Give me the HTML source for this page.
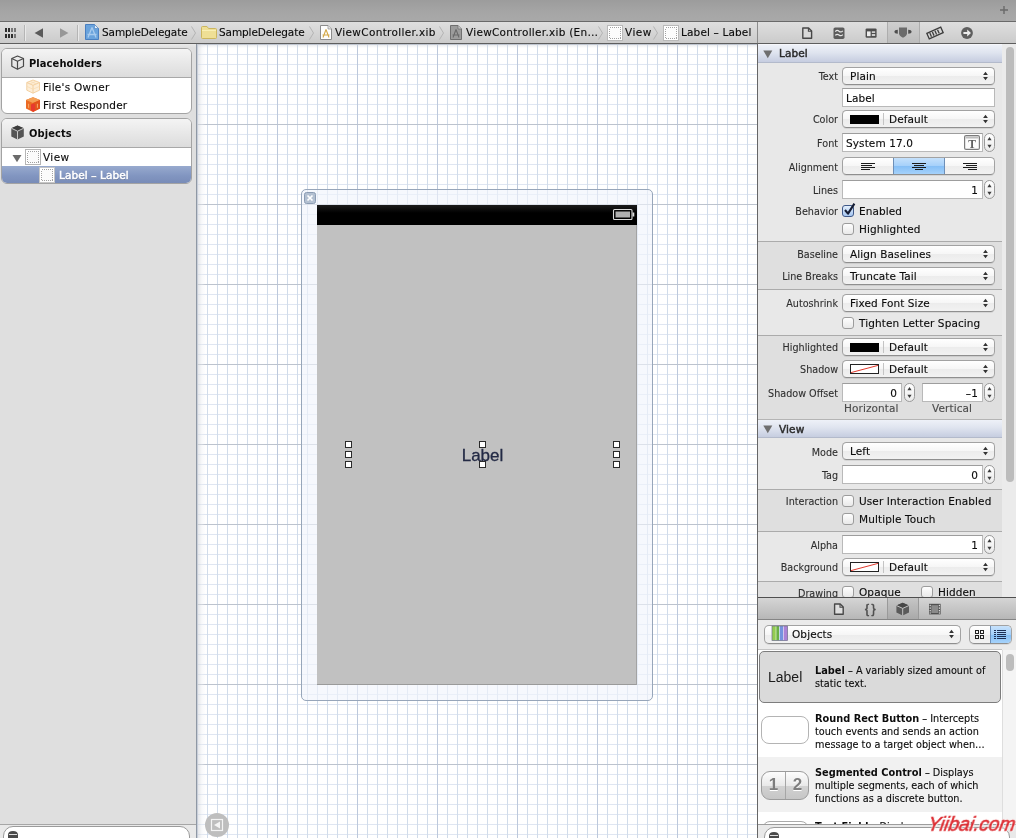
<!DOCTYPE html>
<html>
<head>
<meta charset="utf-8">
<title>ViewController.xib</title>
<style>
html,body{margin:0;padding:0;}
body{width:1016px;height:838px;overflow:hidden;position:relative;background:#dfdfdf;
  font-family:"DejaVu Sans","Liberation Sans",sans-serif;font-size:10.5px;color:#0c0c0c;}
.abs{position:absolute;}
div,span{box-sizing:border-box;}
.t{position:absolute;white-space:nowrap;letter-spacing:0.1px;line-height:14px;height:14px;-webkit-text-stroke:0.12px currentColor;}
.b{font-weight:bold;-webkit-text-stroke:0;font-family:"DejaVu Sans Condensed","DejaVu Sans","Liberation Sans",sans-serif;}
/* top bars */
#title{left:0;top:0;width:1016px;height:21px;background:linear-gradient(#9c9c9c,#a5a5a5 55%,#a9a9a9);}
#tline{left:0;top:21px;width:1016px;height:1px;background:#6a6a6a;}
#jump{left:0;top:22px;width:1016px;height:21px;background:linear-gradient(#dfdfdf,#cbcbcb);}
#jline{left:0;top:43px;width:1016px;height:1px;background:#5e5e5e;}
/* left panel */
#left{left:0;top:44px;width:196px;height:794px;background:linear-gradient(#e9e9e9,#dfdfdf 4px);}
#lline{left:196px;top:44px;width:1px;height:794px;background:#8f98a4;}
.box{position:absolute;left:1px;width:191px;border:1px solid #a3a3a3;border-radius:6px;background:#fff;overflow:hidden;}
.box .hd{position:absolute;left:0;top:0;width:100%;height:29px;background:linear-gradient(#f4f4f4,#dcdcdc);border-bottom:1px solid #a8a8a8;}
/* canvas */
#canvas{left:197px;top:44px;width:560px;height:794px;background-color:#fff;overflow:hidden;}
#cline{left:757px;top:22px;width:1px;height:816px;background:linear-gradient(#8c8c8c,#8c8c8c 21px,#666 21px);}
/* right */
#right{left:758px;top:44px;width:258px;height:794px;background:#e8e8e8;}
.grp{position:absolute;left:758px;width:244px;background:#dfdfdf;}
.sep{position:absolute;left:758px;width:244px;height:1px;background:#ababab;}
.sec{position:absolute;left:758px;width:244px;height:19px;background:linear-gradient(#eef1f8,#dfe4ef 45%,#c6cde0);border-bottom:1px solid #b3bacb;border-top:1px solid #f6f7fb;}
.lbl{position:absolute;right:178px;margin-top:1px;white-space:nowrap;line-height:14px;height:14px;font-family:"DejaVu Sans Condensed","DejaVu Sans","Liberation Sans",sans-serif;font-size:10.7px;color:#2e2e2e;-webkit-text-stroke:0.1px currentColor;}
.pop{position:absolute;left:842px;width:153px;height:18px;border:1px solid #a2a2a2;border-bottom-color:#8f8f8f;border-radius:4.5px;background:linear-gradient(#ffffff,#f6f6f6 50%,#ececec 52%,#f2f2f2);box-shadow:0 1px 0 rgba(0,0,0,.08);}
.fld{position:absolute;height:19px;background:#fff;border:1px solid #b9b9b9;border-top-color:#9d9d9d;}
.stp{position:absolute;width:11px;height:19px;border:1px solid #9a9a9a;border-radius:5.5px;background:linear-gradient(#fff,#eaeaea);}
.cb{position:absolute;width:12px;height:12px;border:1px solid #9c9c9c;border-radius:3px;background:linear-gradient(#fefefe,#e9e9e9);}
.sw{position:absolute;width:29px;height:9px;}
.swsep{position:absolute;width:1px;height:12px;background:#c4c4c4;}
.g{color:#4c4c4c;}
.d{font-size:9.7px;letter-spacing:0;}
.d b{font-weight:bold;font-size:9.8px;-webkit-text-stroke:0;}
#wrap{position:absolute;left:0;top:0;width:1016px;height:838px;will-change:transform;}
</style>
</head>
<body>
<div id="wrap">
<div id="title" class="abs"></div>
<div id="tline" class="abs"></div>
<div id="jump" class="abs"></div>
<div id="jline" class="abs"></div>


<!-- jump bar -->
<svg class="abs" style="left:0;top:22px" width="757" height="21">
  <!-- related items grid icon -->
  <g fill="#2e2e2e">
    <rect x="5" y="6" width="2" height="4"/><rect x="8" y="6" width="2" height="4"/>
    <rect x="5" y="12" width="2" height="4"/><rect x="8" y="12" width="2" height="4"/><rect x="11" y="12" width="2" height="4"/>
  </g>
  <g fill="#777"><rect x="11" y="6" width="2" height="4"/><rect x="14" y="6" width="2" height="4"/><rect x="14" y="12" width="2" height="4"/></g>
  <rect x="24" y="3" width="1" height="16" fill="#b5b5b5"/><rect x="25" y="3" width="1" height="16" fill="#e9e9e9"/>
  <path d="M43 6.2V15.8L34.6 11Z" fill="#5a5a5a"/>
  <path d="M60 6.2V15.8L68.4 11Z" fill="#979797"/>
  <rect x="77" y="3" width="1" height="16" fill="#b5b5b5"/><rect x="78" y="3" width="1" height="16" fill="#e9e9e9"/>
  <!-- project icon -->
  <path d="M85.5 2.5H94.5L98.5 6.5V17.5H85.5Z" fill="#6aa3dc" stroke="#4a7fc0" stroke-width="1"/>
  <path d="M94.5 2.5V6.5H98.5Z" fill="#e6f0fa" stroke="#4a7fc0" stroke-width=".6"/>
  <path d="M92 5.5L88 15.5M92 5.5L96 15.5M87.5 12.5H96.5" stroke="#a9cbee" stroke-width="1.3" fill="none"/>
  <!-- chevrons -->
  <g stroke="#b4b4b4" stroke-width="1" fill="none">
    <path d="M191.5 4.5L195.5 11L191.5 17.5"/><path d="M309.5 4.5L313.5 11L309.5 17.5"/>
    <path d="M439.5 4.5L443.5 11L439.5 17.5"/><path d="M598.5 4.5L602.5 11L598.5 17.5"/>
    <path d="M653.5 4.5L657.5 11L653.5 17.5"/>
  </g>
  <!-- folder -->
  <path d="M201.5 5.5Q201.5 4.5 202.5 4.5H207L208.5 6.5H215.5Q216.5 6.5 216.5 7.5V15.5Q216.5 16.5 215.5 16.5H202.5Q201.5 16.5 201.5 15.5Z" fill="#efdf95" stroke="#ccb65e" stroke-width="1"/>
  <path d="M202 8.5H216" stroke="#faf0b4" stroke-width="1"/>
  <!-- xib icon 1 -->
  <path d="M320.5 3.5H328L331.5 7V17.5H320.5Z" fill="#fdfdfd" stroke="#8c8c8c" stroke-width="1"/>
  <path d="M328 3.5V7H331.5" fill="#e4e4e4" stroke="#8c8c8c" stroke-width=".7"/>
  <path d="M326 7.5L323 15.5M326 7.5L329 15.5M322.5 13H329.5" stroke="#d4a94a" stroke-width="1.1" fill="none"/>
  <!-- xib icon 2 (gray) -->
  <path d="M450.5 3.5H458L461.5 7V17.5H450.5Z" fill="#9c9c9c" stroke="#6f6f6f" stroke-width="1"/>
  <path d="M458 3.5V7H461.5" fill="#c4c4c4" stroke="#6f6f6f" stroke-width=".7"/>
  <path d="M456 7.5L453 15.5M456 7.5L459 15.5M452.5 13H459.5" stroke="#6a6a6a" stroke-width="1.1" fill="none"/>
  <!-- view icons -->
  <rect x="607.5" y="3.5" width="15" height="15" fill="#fff" stroke="#b9b9b9" stroke-width="1"/>
  <rect x="609.5" y="5.5" width="11" height="11" fill="#fcfcfc" stroke="#a2a2a2" stroke-width="1" stroke-dasharray="1 1" shape-rendering="crispEdges"/>
  <rect x="663.5" y="3.5" width="15" height="15" fill="#fff" stroke="#b9b9b9" stroke-width="1"/>
  <rect x="665.5" y="5.5" width="11" height="11" fill="#fcfcfc" stroke="#a2a2a2" stroke-width="1" stroke-dasharray="1 1" shape-rendering="crispEdges"/>
</svg>
<span class="t" style="left:102px;top:25px;letter-spacing:-0.1px">SampleDelegate</span>
<span class="t" style="left:219px;top:25px;letter-spacing:-0.1px">SampleDelegate</span>
<span class="t" style="left:335px;top:25px;letter-spacing:0.33px">ViewController.xib</span>
<span class="t" style="left:466px;top:25px;letter-spacing:0.27px">ViewController.xib (En…</span>
<span class="t" style="left:625px;top:25px;letter-spacing:0.5px">View</span>
<span class="t" style="left:681px;top:25px;letter-spacing:0.15px">Label – Label</span>

<div id="left" class="abs"></div>

<!-- left outline -->
<div class="box" style="top:48px;height:66px;">
  <div class="hd"></div>
  <svg class="abs" style="left:1px;top:0" width="190" height="66">
    <!-- outline cube -->
    <g fill="none" stroke="#4a4a4a" stroke-width="1.2" stroke-linejoin="round">
      <path d="M14.5 7L20.5 9.5V17.2L14.5 20.2L8.8 17.2V9.5Z"/>
      <path d="M8.8 9.5L14.5 12.3L20.5 9.5M14.5 12.3V20.2"/>
    </g>
    <!-- file's owner cube -->
    <g stroke="#f2cd9b" stroke-width="0.9" stroke-linejoin="round">
      <path d="M30 31L36.5 33.5V41.2L30 44.2L23.8 41.2V33.5Z" fill="#fdeed8"/>
      <path d="M23.8 33.5L30 36.3L36.5 33.5M30 36.3V44.2" fill="none"/>
      <path d="M23.8 37.4L30 40.2L36.5 37.4M27 32.2L33.2 34.9M33.2 32.2L27 34.9" fill="none" stroke="#f7dab0" stroke-width=".7"/>
    </g>
    <!-- first responder cube -->
    <path d="M30 48.2L37 51V59.6L30 63L23 59.6V51Z" fill="#ec6a24"/>
    <path d="M30 48.2L37 51L30 54L23 51Z" fill="#f4a055"/>
    <path d="M30 54V63L37 59.6V51Z" fill="#e2531c"/>
    <path d="M28 55.4L30 54.4L32 55.4V61.6L30 62.6L28 61.6Z" fill="#e73a2e"/>
    <path d="M25.6 54.8V58.8M34.4 54.8V58.8" stroke="#f6ab68" stroke-width="1" fill="none"/>
  </svg>
  <span class="t b" style="left:27px;top:8px;font-size:11px">Placeholders</span>
  <span class="t" style="left:41px;top:31px;letter-spacing:0.25px">File's Owner</span>
  <span class="t" style="left:41px;top:49px;letter-spacing:0.2px">First Responder</span>
</div>
<div class="box" style="top:118px;height:66px;">
  <div class="hd"></div>
  <div class="abs" style="left:0;top:47px;width:191px;height:19px;background:linear-gradient(#98aace,#8296c1 50%,#7689b5)"></div>
  <svg class="abs" style="left:1px;top:0" width="190" height="66">
    <!-- solid cube -->
    <path d="M14.5 6.5L20.8 9.2V17.4L14.5 20.6L8.3 17.4V9.2Z" fill="#555"/>
    <path d="M14.5 6.5L20.8 9.2L14.5 12.2L8.3 9.2Z" fill="#3d3d3d"/>
    <path d="M8.3 9.2L14.5 12.2L20.8 9.2M14.5 12.2V20.6" stroke="#d8d8d8" stroke-width=".9" fill="none"/>
    <!-- disclosure triangle -->
    <path d="M9.5 36H18.5L14 43.2Z" fill="#6b6b6b"/>
    <!-- view icon -->
    <rect x="22.5" y="30.5" width="15" height="15" fill="#fff" stroke="#b5b5b5"/>
    <rect x="24.5" y="32.5" width="11" height="11" fill="#fbfbfb" stroke="#a2a2a2" stroke-dasharray="1 1" shape-rendering="crispEdges"/>
    <rect x="36.5" y="48.5" width="15" height="15" fill="#fff" stroke="#c6c6c6"/>
    <rect x="38.5" y="50.5" width="11" height="11" fill="#fbfbfb" stroke="#a2a2a2" stroke-dasharray="1 1" shape-rendering="crispEdges"/>
  </svg>
  <span class="t b" style="left:27px;top:8px;font-size:11px">Objects</span>
  <span class="t" style="left:41px;top:31px;letter-spacing:0.4px">View</span>
  <span class="t" style="left:57px;top:49px;-webkit-text-stroke:0.5px #fff;color:#fff;text-shadow:0 1px 0 rgba(40,50,80,.45)">Label – Label</span>
</div>


<!-- left bottom filter bar -->
<div class="abs" style="left:0;top:824px;width:196px;height:1px;background:#a6a6a6"></div>
<div class="abs" style="left:0;top:825px;width:196px;height:13px;background:#e9e9e9"></div>
<div class="abs" style="left:3px;top:826px;width:187px;height:22px;border:1px solid #9b9b9b;border-radius:10px;background:#fff"></div>
<svg class="abs" style="left:6px;top:829px" width="14" height="9"><path d="M2 9V6Q2 2 7 2Q12 2 12 6V9Z" fill="#4a4a4a"/><rect x="3" y="5" width="8" height="1" fill="#ddd"/></svg>
<div id="lline" class="abs"></div>

<div id="canvas" class="abs">
<svg class="abs" style="left:0;top:0" width="560" height="794">
<defs>
<pattern id="gmin" width="10" height="10" patternUnits="userSpaceOnUse"><path d="M0 0.5H10" stroke="#dfe6f2" stroke-width="1" fill="none"/><path d="M0.5 0V10" stroke="#d1dcea" stroke-width="1" fill="none"/></pattern>
<pattern id="gmaj" width="80" height="80" patternUnits="userSpaceOnUse"><path d="M0.5 0V80" stroke="#bdc9dc" stroke-width="1" fill="none"/><path d="M0 0.5H80" stroke="#bcc3ce" stroke-width="1" fill="none"/></pattern>
</defs>
<rect width="560" height="794" fill="url(#gmin)"/>
<rect width="560" height="794" fill="url(#gmaj)"/>
</svg>

<div class="abs" style="left:0;top:0;width:9px;height:794px;background:linear-gradient(to right,rgba(205,208,214,.6),rgba(235,238,243,.35) 55%,rgba(255,255,255,0))"></div>
<div class="abs" style="left:0;top:0;width:560px;height:4px;background:linear-gradient(rgba(200,204,212,.45),rgba(255,255,255,0))"></div>
<!-- device frame (coords relative to canvas at 197,44) -->
<div class="abs" style="left:104px;top:145px;width:352px;height:512px;border:1px solid #97a6ba;border-radius:5px;background:rgba(240,244,251,.62);"></div>
<div class="abs" style="left:107px;top:148px;width:12px;height:12px;border:1px solid #8b9cb3;border-radius:2.5px;background:#b3c0d1;"></div>
<svg class="abs" style="left:107px;top:148px" width="12" height="12"><path d="M3.5 3.5L8.5 8.5M8.5 3.5L3.5 8.5" stroke="#fff" stroke-width="1.7" fill="none"/></svg>
<div class="abs" style="left:120px;top:161px;width:320px;height:480px;background:#c1c1c1;border-right:1px solid #a3a3a3;border-bottom:1px solid #9a9a9a;"></div>
<div class="abs" style="left:120px;top:161px;width:320px;height:20px;background:linear-gradient(#1c1c1c,#000 40%);"></div>
<svg class="abs" style="left:414px;top:164px" width="26" height="14">
  <rect x="2.5" y="1.5" width="18.5" height="10" rx="1" fill="none" stroke="#dcdcdc" stroke-width="1.1"/>
  <rect x="4.5" y="3.5" width="14.5" height="6" fill="#b0b0b0"/>
  <rect x="21.5" y="4.5" width="1.8" height="4" fill="#dcdcdc"/>
</svg>
<span class="abs" style="left:120px;top:402px;width:331px;text-align:center;font:17px/20px 'Liberation Sans',sans-serif;color:#232a45;-webkit-text-stroke:0.3px #232a45;white-space:nowrap">Label</span>
<svg class="abs" style="left:140px;top:390px" width="290" height="40" shape-rendering="crispEdges">
  <g fill="#fff" stroke="#2a2a2a" stroke-width="1">
    <rect x="8.5" y="7.5" width="6" height="6"/><rect x="8.5" y="17.5" width="6" height="6"/><rect x="8.5" y="27.5" width="6" height="6"/>
    <rect x="142.5" y="7.5" width="6" height="6"/><rect x="142.5" y="27.5" width="6" height="6"/>
    <rect x="276.5" y="7.5" width="6" height="6"/><rect x="276.5" y="17.5" width="6" height="6"/><rect x="276.5" y="27.5" width="6" height="6"/>
  </g>
</svg>
<!-- dock toggle button -->
<div class="abs" style="left:8px;top:769px;width:24px;height:24px;border-radius:12px;background:#bebebe;"></div>
<svg class="abs" style="left:8px;top:769px" width="24" height="24">
  <rect x="6.5" y="6.5" width="11" height="11" fill="none" stroke="#f4f4f4" stroke-width="1.2"/>
  <path d="M15 8.5V15.5L9 12Z" fill="#f4f4f4"/>
</svg>
</div>
<div id="cline" class="abs"></div>

<div id="right" class="abs"></div>
<!-- inspector -->
<div class="grp" style="top:242px;height:47px"></div>
<div class="grp" style="top:336px;height:83px"></div>
<div class="grp" style="top:490px;height:41px"></div>
<div class="grp" style="top:582px;height:16px"></div>
<div class="sep" style="top:241px"></div>
<div class="sep" style="top:289px"></div>
<div class="sep" style="top:335px"></div>
<div class="sep" style="top:489px"></div>
<div class="sep" style="top:531px"></div>
<div class="sep" style="top:581px"></div>
<div class="sec" style="top:44px"></div>
<svg class="abs" style="left:763px;top:50px" width="10" height="9"><path d="M0.3 0.5H9.3L4.8 8.2Z" fill="#6f6f6f"/></svg>
<span class="t" style="left:779px;top:46px;color:#2a2a2a;-webkit-text-stroke:0.45px #2a2a2a">Label</span>
<span class="lbl" style="top:69px">Text</span>
<div class="pop" style="top:67px"></div>
<svg class="abs" style="left:982px;top:71px" width="8" height="11"><path d="M3.5 0.8L5.9 4H1.1Z M3.5 9.2L5.9 6H1.1Z" fill="#333"/></svg>
<span class="t" style="left:850px;top:69px">Plain</span>
<div class="fld" style="left:842px;top:88px;width:153px"></div>
<span class="t" style="left:846px;top:91px">Label</span>
<span class="lbl" style="top:112px">Color</span>
<div class="pop" style="top:110px"></div>
<svg class="abs" style="left:982px;top:114px" width="8" height="11"><path d="M3.5 0.8L5.9 4H1.1Z M3.5 9.2L5.9 6H1.1Z" fill="#333"/></svg>
<div class="sw" style="left:850px;top:115px;background:#000"></div>
<div class="swsep" style="left:883px;top:113px"></div>
<span class="t" style="left:889px;top:112px">Default</span>
<span class="lbl" style="top:136px">Font</span>
<div class="fld" style="left:842px;top:133px;width:141px"></div>
<span class="t" style="left:846px;top:136px">System 17.0</span>
<div class="stp" style="left:984px;top:133px"></div>
<svg class="abs" style="left:984px;top:133px" width="11" height="19"><path d="M5.5 4L7.6 7.2H3.4Z M5.5 15L7.6 11.8H3.4Z" fill="#3c3c3c"/></svg>
<svg class="abs" style="left:964px;top:135px" width="16" height="15"><rect x=".6" y=".6" width="14.8" height="13.8" rx="1.5" fill="#fcfcfc" stroke="#7c7c7c" stroke-width="1.2"/><rect x="1.5" y="1.5" width="13" height="2" fill="#bdbdbd"/><text x="8" y="12.6" text-anchor="middle" font-family="Liberation Serif,serif" font-weight="bold" font-size="11.5" fill="#5c5c5c">T</text></svg>
<span class="lbl" style="top:160px">Alignment</span>
<div class="pop" style="top:157px;overflow:hidden"><div class="abs" style="left:50px;top:-1px;width:52px;height:18px;background:linear-gradient(#c9e3fc,#a5d0fa 50%,#86bff6 52%,#a9d4fb);border-left:1px solid #6d8fb8;border-right:1px solid #6d8fb8"></div><div class="abs" style="left:0;top:0;width:50px;height:16px"></div></div>
<svg class="abs" style="left:842px;top:157px" width="153" height="18" shape-rendering="crispEdges"><g fill="#1c1c1c"><rect x="19" y="6" width="14" height="1"/><rect x="19" y="8" width="11" height="1"/><rect x="19" y="10" width="14" height="1"/><rect x="19" y="12" width="9" height="1"/><rect x="70" y="6" width="14" height="1"/><rect x="72" y="8" width="10" height="1"/><rect x="70" y="10" width="14" height="1"/><rect x="73" y="12" width="8" height="1"/><rect x="121" y="6" width="14" height="1"/><rect x="124" y="8" width="11" height="1"/><rect x="121" y="10" width="14" height="1"/><rect x="126" y="12" width="9" height="1"/></g></svg>
<span class="lbl" style="top:183px">Lines</span>
<div class="fld" style="left:842px;top:180px;width:141px"></div>
<span class="t" style="left:842px;width:136px;text-align:right;top:183px">1</span>
<div class="stp" style="left:984px;top:180px"></div>
<svg class="abs" style="left:984px;top:180px" width="11" height="19"><path d="M5.5 4L7.6 7.2H3.4Z M5.5 15L7.6 11.8H3.4Z" fill="#3c3c3c"/></svg>
<span class="lbl" style="top:204px">Behavior</span>
<div class="cb" style="left:842px;top:205px;background:linear-gradient(#e3effc,#a6c6f1);border-color:#3f5888"></div>
<svg class="abs" style="left:842px;top:201px" width="16" height="17"><path d="M3 9L6 12.6L12.4 2.6" stroke="#141c33" stroke-width="2.1" fill="none" stroke-linejoin="round"/></svg>
<span class="t" style="left:859px;top:204px">Enabled</span>
<div class="cb" style="left:842px;top:223px"></div>
<span class="t" style="left:859px;top:222px">Highlighted</span>
<span class="lbl" style="top:247px">Baseline</span>
<div class="pop" style="top:245px"></div>
<svg class="abs" style="left:982px;top:249px" width="8" height="11"><path d="M3.5 0.8L5.9 4H1.1Z M3.5 9.2L5.9 6H1.1Z" fill="#333"/></svg>
<span class="t" style="left:850px;top:247px">Align Baselines</span>
<span class="lbl" style="top:269px">Line Breaks</span>
<div class="pop" style="top:267px"></div>
<svg class="abs" style="left:982px;top:271px" width="8" height="11"><path d="M3.5 0.8L5.9 4H1.1Z M3.5 9.2L5.9 6H1.1Z" fill="#333"/></svg>
<span class="t" style="left:850px;top:269px">Truncate Tail</span>
<span class="lbl" style="top:296px">Autoshrink</span>
<div class="pop" style="top:294px"></div>
<svg class="abs" style="left:982px;top:298px" width="8" height="11"><path d="M3.5 0.8L5.9 4H1.1Z M3.5 9.2L5.9 6H1.1Z" fill="#333"/></svg>
<span class="t" style="left:850px;top:296px">Fixed Font Size</span>
<div class="cb" style="left:842px;top:317px"></div>
<span class="t" style="left:859px;top:316px">Tighten Letter Spacing</span>
<span class="lbl" style="top:340px">Highlighted</span>
<div class="pop" style="top:338px"></div>
<svg class="abs" style="left:982px;top:342px" width="8" height="11"><path d="M3.5 0.8L5.9 4H1.1Z M3.5 9.2L5.9 6H1.1Z" fill="#333"/></svg>
<div class="sw" style="left:850px;top:343px;background:#000"></div>
<div class="swsep" style="left:883px;top:341px"></div>
<span class="t" style="left:889px;top:340px">Default</span>
<span class="lbl" style="top:362px">Shadow</span>
<div class="pop" style="top:360px"></div>
<svg class="abs" style="left:982px;top:364px" width="8" height="11"><path d="M3.5 0.8L5.9 4H1.1Z M3.5 9.2L5.9 6H1.1Z" fill="#333"/></svg>
<svg class="abs" style="left:850px;top:364px" width="29" height="10"><rect x=".5" y=".5" width="28" height="9" fill="#fff" stroke="#222"/><path d="M1 8.6L28 1.4" stroke="#e23a2e" stroke-width="1"/></svg>
<div class="swsep" style="left:883px;top:363px"></div>
<span class="t" style="left:889px;top:362px">Default</span>
<span class="lbl" style="top:386px">Shadow Offset</span>
<div class="fld" style="left:842px;top:383px;width:60px"></div>
<span class="t" style="left:842px;width:55px;text-align:right;top:386px">0</span>
<div class="stp" style="left:904px;top:383px"></div>
<svg class="abs" style="left:904px;top:383px" width="11" height="19"><path d="M5.5 4L7.6 7.2H3.4Z M5.5 15L7.6 11.8H3.4Z" fill="#3c3c3c"/></svg>
<div class="fld" style="left:922px;top:383px;width:61px"></div>
<span class="t" style="left:922px;width:56px;text-align:right;top:386px">–1</span>
<div class="stp" style="left:984px;top:383px"></div>
<svg class="abs" style="left:984px;top:383px" width="11" height="19"><path d="M5.5 4L7.6 7.2H3.4Z M5.5 15L7.6 11.8H3.4Z" fill="#3c3c3c"/></svg>
<span class="t g" style="left:844px;top:401px">Horizontal</span>
<span class="t g" style="left:932px;top:401px">Vertical</span>
<div class="sec" style="top:419px;border-top-color:#b4b4b4"></div>
<svg class="abs" style="left:763px;top:425px" width="10" height="9"><path d="M0.3 0.5H9.3L4.8 8.2Z" fill="#6f6f6f"/></svg>
<span class="t" style="left:779px;top:422px;color:#2a2a2a;-webkit-text-stroke:0.45px #2a2a2a">View</span>
<span class="lbl" style="top:445px">Mode</span>
<div class="pop" style="top:442px"></div>
<svg class="abs" style="left:982px;top:446px" width="8" height="11"><path d="M3.5 0.8L5.9 4H1.1Z M3.5 9.2L5.9 6H1.1Z" fill="#333"/></svg>
<span class="t" style="left:850px;top:444px">Left</span>
<span class="lbl" style="top:468px">Tag</span>
<div class="fld" style="left:842px;top:465px;width:141px"></div>
<span class="t" style="left:842px;width:136px;text-align:right;top:468px">0</span>
<div class="stp" style="left:984px;top:465px"></div>
<svg class="abs" style="left:984px;top:465px" width="11" height="19"><path d="M5.5 4L7.6 7.2H3.4Z M5.5 15L7.6 11.8H3.4Z" fill="#3c3c3c"/></svg>
<span class="lbl" style="top:494px">Interaction</span>
<div class="cb" style="left:842px;top:495px"></div>
<span class="t" style="left:859px;top:494px">User Interaction Enabled</span>
<div class="cb" style="left:842px;top:513px"></div>
<span class="t" style="left:859px;top:512px">Multiple Touch</span>
<span class="lbl" style="top:538px">Alpha</span>
<div class="fld" style="left:842px;top:535px;width:141px"></div>
<span class="t" style="left:842px;width:136px;text-align:right;top:538px">1</span>
<div class="stp" style="left:984px;top:535px"></div>
<svg class="abs" style="left:984px;top:535px" width="11" height="19"><path d="M5.5 4L7.6 7.2H3.4Z M5.5 15L7.6 11.8H3.4Z" fill="#3c3c3c"/></svg>
<span class="lbl" style="top:560px">Background</span>
<div class="pop" style="top:558px"></div>
<svg class="abs" style="left:982px;top:562px" width="8" height="11"><path d="M3.5 0.8L5.9 4H1.1Z M3.5 9.2L5.9 6H1.1Z" fill="#333"/></svg>
<svg class="abs" style="left:850px;top:562px" width="29" height="10"><rect x=".5" y=".5" width="28" height="9" fill="#fff" stroke="#222"/><path d="M1 8.6L28 1.4" stroke="#e23a2e" stroke-width="1"/></svg>
<div class="swsep" style="left:883px;top:561px"></div>
<span class="t" style="left:889px;top:560px">Default</span>
<span class="lbl" style="top:586px">Drawing</span>
<div class="cb" style="left:842px;top:586px"></div>
<span class="t" style="left:859px;top:585px">Opaque</span>
<div class="cb" style="left:921px;top:586px"></div>
<span class="t" style="left:938px;top:585px">Hidden</span>
<div class="abs" style="left:1002px;top:44px;width:14px;height:554px;background:#ebebeb"></div>
<div class="abs" style="left:1006px;top:47px;width:8px;height:435px;border-radius:4px;background:#bcbcbc"></div>
<!-- /inspector -->
<!-- library -->
<svg class="abs" style="left:758px;top:22px" width="258" height="21">
<rect x="130" y="0" width="31" height="21" fill="rgba(0,0,0,.07)"/><rect x="129" y="0" width="1" height="21" fill="#adadad"/><rect x="161" y="0" width="1" height="21" fill="#adadad"/>
<path d="M44.8 6H50.6L53.6 9V16.2H44.8Z" fill="#d9d9d9" stroke="#474747" stroke-width="1.4" stroke-linejoin="round"/><path d="M50.4 6V9.2H53.6" fill="none" stroke="#474747" stroke-width="1.1"/>
<rect x="75.5" y="5.5" width="11" height="11.4" rx="1.6" fill="#5c5c5c"/><path d="M77.3 9.6Q79 7.6 81 9.2T84.8 8.8M77.3 13.4Q79 11.4 81 13T84.8 12.6" fill="none" stroke="#e6e6e6" stroke-width="1.2"/>
<rect x="107.6" y="6.4" width="11" height="9.4" rx="1.2" fill="#4d4d4d"/><rect x="109" y="9.4" width="3.6" height="4.8" fill="#ececec"/><rect x="113.8" y="9.4" width="3.4" height="1.4" fill="#ececec"/><rect x="113.8" y="12.2" width="3.4" height="1.6" fill="#ececec"/>
<path d="M141 5.4H149V11.2Q149 13.8 145 15.8Q141 13.8 141 11.2Z" fill="#6b6b6b"/><path d="M139.8 7.8V11.8Q136.4 11.6 136.4 9.8T139.8 7.8Z M150.2 7.8V11.8Q153.6 11.6 153.6 9.8T150.2 7.8Z" fill="#4e4e4e"/>
<g transform="rotate(-24 177 11)"><rect x="169.4" y="8" width="15.2" height="6" fill="#d6d6d6" stroke="#3c3c3c" stroke-width="1.3"/><g fill="#3c3c3c"><rect x="171.6" y="9" width="1.3" height="4"/><rect x="174.4" y="9" width="1.3" height="4"/><rect x="177.2" y="9" width="1.3" height="4"/><rect x="180" y="9" width="1.3" height="4"/></g></g>
<circle cx="209" cy="11" r="5.9" fill="#5e5e5e"/><path d="M205.4 9.9H209.2V7.6L213 11L209.2 14.4V12.1H205.4Z" fill="#ececec"/>
</svg>
<svg class="abs" style="left:998px;top:4px" width="12" height="12"><path d="M6 2V10M2 6H10" stroke="#6a6a6a" stroke-width="1.4" fill="none"/></svg>
<div class="abs" style="left:758px;top:597px;width:258px;height:1px;background:#4f4f4f"></div>
<div class="abs" style="left:758px;top:598px;width:258px;height:21px;background:linear-gradient(#d5d5d5,#b7b7b7)"></div>
<div class="abs" style="left:758px;top:619px;width:258px;height:1px;background:#858585"></div>
<div class="abs" style="left:758px;top:620px;width:258px;height:218px;background:#ebebeb"></div>
<svg class="abs" style="left:758px;top:598px" width="258" height="21">
<rect x="130" y="0" width="30" height="21" fill="rgba(0,0,0,.07)"/><rect x="129" y="0" width="1" height="21" fill="#9a9a9a"/><rect x="160" y="0" width="1" height="21" fill="#9a9a9a"/>
<path d="M76.6 6H82.2L85.2 9V16.2H76.6Z" fill="#dedede" stroke="#474747" stroke-width="1.4" stroke-linejoin="round"/><path d="M82 6V9.2H85.2" fill="none" stroke="#474747" stroke-width="1.1"/>
</svg>
<span class="abs" style="left:865px;top:601px;font:12px/16px 'Liberation Sans',sans-serif;color:#4f4f4f;-webkit-text-stroke:0.55px #4f4f4f;white-space:nowrap;letter-spacing:2.5px">{}</span>
<svg class="abs" style="left:758px;top:598px" width="258" height="21">
<path d="M144.7 4.8L151 7.5V14.6L144.7 17.6L138.4 14.6V7.5Z" fill="#5a5a5a"/><path d="M144.7 4.8L151 7.5L144.7 10.4L138.4 7.5Z" fill="#474747"/><path d="M138.4 7.5L144.7 10.4L151 7.5M144.7 10.4V17.6" stroke="#cfcfcf" stroke-width=".9" fill="none"/>
<rect x="171" y="5.8" width="11.6" height="10.6" fill="#4f4f4f"/><rect x="173.4" y="7.2" width="6.8" height="7.8" fill="#8a8a8a"/><g fill="#dcdcdc"><rect x="171.6" y="6.8" width="1.2" height="1.4"/><rect x="171.6" y="9.4" width="1.2" height="1.4"/><rect x="171.6" y="12" width="1.2" height="1.4"/><rect x="171.6" y="14.4" width="1.2" height="1.2"/><rect x="180.8" y="6.8" width="1.2" height="1.4"/><rect x="180.8" y="9.4" width="1.2" height="1.4"/><rect x="180.8" y="12" width="1.2" height="1.4"/><rect x="180.8" y="14.4" width="1.2" height="1.2"/></g>
</svg>
<div class="pop" style="left:764px;top:625px;width:197px;height:19px;border-radius:5px"></div>
<svg class="abs" style="left:771px;top:625px" width="18" height="17"><rect x="1" y="1" width="4" height="14.5" fill="#93cc50"/><rect x="5" y="1" width="3.6" height="14.5" fill="#6bb044"/><rect x="8.6" y="1" width="4" height="14.5" fill="#7593de"/><rect x="12.6" y="1" width="4" height="14.5" fill="#ab82d6"/><rect x="4.6" y="1" width=".8" height="14.5" fill="#d9efc0"/><rect x="8.2" y="1" width=".8" height="14.5" fill="#cfe0f5"/><rect x="12.2" y="1" width=".8" height="14.5" fill="#dccff0"/><rect x="1" y="1" width="15.6" height="14.5" fill="none" stroke="#70708c" stroke-width=".7"/></svg>
<span class="t" style="left:792px;top:627px">Objects</span>
<svg class="abs" style="left:948px;top:629px" width="8" height="11"><path d="M3.5 0.8L5.9 4H1.1Z M3.5 9.2L5.9 6H1.1Z" fill="#333"/></svg>
<div class="pop" style="left:969px;top:625px;width:43px;height:19px;border-radius:5px;overflow:hidden"><div class="abs" style="left:20px;top:-1px;width:23px;height:19px;background:linear-gradient(#cbe4fc,#a5d0fa 50%,#86bff6 52%,#aad5fb);border-left:1px solid #6d8fb8"></div></div>
<svg class="abs" style="left:969px;top:625px" width="43" height="19" shape-rendering="crispEdges"><g fill="none" stroke="#222" stroke-width="1"><rect x="6.5" y="5.5" width="3" height="3"/><rect x="11.5" y="5.5" width="3" height="3"/><rect x="6.5" y="10.5" width="3" height="3"/><rect x="11.5" y="10.5" width="3" height="3"/></g><g fill="#1d2f55"><rect x="25" y="5" width="2" height="1"/><rect x="28" y="5" width="9" height="1"/><rect x="25" y="7" width="2" height="1"/><rect x="28" y="7" width="9" height="1"/><rect x="25" y="9" width="2" height="1"/><rect x="28" y="9" width="9" height="1"/><rect x="25" y="11" width="2" height="1"/><rect x="28" y="11" width="9" height="1"/><rect x="25" y="13" width="2" height="1"/><rect x="28" y="13" width="9" height="1"/></g></svg>
<div class="abs" style="left:758px;top:649px;width:244px;height:176px;background:#fff;border-top:1px solid #c4c4c4;overflow:hidden"></div>
<div class="abs" style="left:758px;top:757px;width:244px;height:55px;background:#f1f1f1"></div>
<div class="abs" style="left:759px;top:651px;width:242px;height:52px;background:#dadada;border:1px solid #7d7d7d;border-radius:5px"></div>
<span class="abs" style="left:768px;top:668px;font:14px/18px 'Liberation Sans',sans-serif;color:#1c1c1c;white-space:nowrap">Label</span>
<span class="t d" style="left:815px;top:664px"><b>Label</b> – A variably sized amount of</span>
<span class="t d" style="left:815px;top:677px">static text.</span>
<div class="abs" style="left:761px;top:716px;width:48px;height:28px;border:1px solid #b4b4b4;border-radius:8px;background:#fff"></div>
<span class="t d" style="left:815px;top:712px"><b>Round Rect Button</b> – Intercepts</span>
<span class="t d" style="left:815px;top:725px">touch events and sends an action</span>
<span class="t d" style="left:815px;top:738px">message to a target object when…</span>
<div class="abs" style="left:761px;top:771px;width:48px;height:29px;border:1px solid #9c9c9c;border-radius:9px;background:linear-gradient(#fdfdfd,#e9e9e9 50%,#d2d2d2 52%,#c6c6c6)"></div>
<div class="abs" style="left:785px;top:772px;width:1px;height:27px;background:#a6a6a6"></div>
<span class="abs" style="left:762px;top:775px;width:23px;text-align:center;font:bold 17px/20px 'Liberation Sans',sans-serif;color:#7d7d7d;text-shadow:0 1px 0 #fff">1</span>
<span class="abs" style="left:786px;top:775px;width:23px;text-align:center;font:bold 17px/20px 'Liberation Sans',sans-serif;color:#7d7d7d;text-shadow:0 1px 0 #fff">2</span>
<span class="t d" style="left:815px;top:766px"><b>Segmented Control</b> – Displays</span>
<span class="t d" style="left:815px;top:779px">multiple segments, each of which</span>
<span class="t d" style="left:815px;top:792px">functions as a discrete button.</span>
<div class="abs" style="left:758px;top:812px;width:244px;height:13px;overflow:hidden"><span class="t d" style="left:57px;top:8px"><b>Text Field</b> – Displays a rounded</span><div class="abs" style="left:4px;top:9px;width:47px;height:20px;border:1px solid #aaa;border-radius:8px;background:#fff"></div></div>
<div class="abs" style="left:1002px;top:650px;width:14px;height:175px;background:#f4f4f4;border-left:1px solid #dedede"></div>
<div class="abs" style="left:1006px;top:654px;width:8px;height:17px;border-radius:4px;background:#bdbdbd"></div>
<div class="abs" style="left:758px;top:824px;width:258px;height:1px;background:#9d9d9d"></div>
<div class="abs" style="left:758px;top:825px;width:258px;height:13px;background:#e9e9e9"></div>
<div class="abs" style="left:764px;top:827px;width:246px;height:22px;border:1px solid #9b9b9b;border-radius:10px;background:#fff"></div>
<svg class="abs" style="left:767px;top:830px" width="14" height="9"><path d="M2 9V6Q2 2 7 2Q12 2 12 6V9Z" fill="#4a4a4a"/><rect x="3" y="5" width="8" height="1" fill="#ddd"/></svg>
<span class="abs" style="left:926px;top:814px;font:italic 19px/22px 'Liberation Sans',sans-serif;color:#dc2a30;-webkit-text-stroke:0.5px #dc2a30;white-space:nowrap;letter-spacing:0;transform:skewX(-10deg);transform-origin:0 100%;text-shadow:1px 1px 0 rgba(255,255,255,.8),-1px -1px 0 rgba(255,255,255,.6)">Yiibai.com</span>
<!-- /library -->
</div>
</body>
</html>
